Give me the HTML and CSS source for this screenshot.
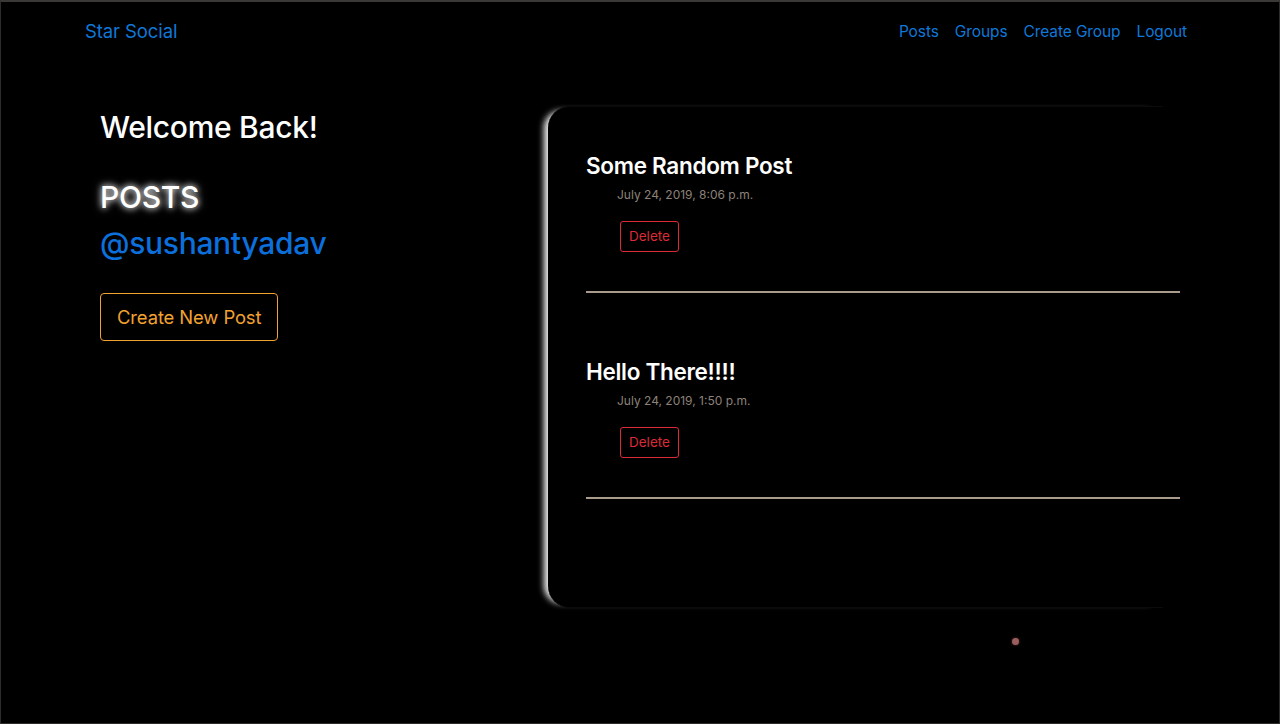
FILE: index.html
```html
<!DOCTYPE html>
<html>
<head>
<meta charset="utf-8">
<link rel="stylesheet" href="styles.css">
</head>
<body>
<div class="frame">
  <nav class="navbar">
    <a class="brand" href="#">Star Social</a>
    <ul class="nav-links">
      <li><a href="#">Posts</a></li>
      <li><a href="#">Groups</a></li>
      <li><a href="#">Create Group</a></li>
      <li><a href="#">Logout</a></li>
    </ul>
  </nav>
  <main class="content">
    <section class="sidebar">
      <h2 class="welcome">Welcome Back!</h2>
      <h2 class="posts-title">POSTS</h2>
      <h2 class="username">@sushantyadav</h2>
      <a class="btn-create" href="#">Create New Post</a>
    </section>
    <section class="card">
      <article class="post">
        <h3 class="post-title">Some Random Post</h3>
        <div class="post-date">July 24, 2019, 8:06 p.m.</div>
        <a class="btn-delete" href="#">Delete</a>
        <hr class="post-rule">
      </article>
      <article class="post">
        <h3 class="post-title">Hello There!!!!</h3>
        <div class="post-date">July 24, 2019, 1:50 p.m.</div>
        <a class="btn-delete" href="#">Delete</a>
        <hr class="post-rule">
      </article>
    </section>
  </main>
  <span class="dot"></span>
</div>
</body>
</html>
```
FILE: styles.css
```css
* { box-sizing: border-box; }
html, body { margin: 0; padding: 0; background: #000; }
body {
  font-family: Inter, "Noto Sans", "Liberation Sans", sans-serif;
  color: #fff;
}
a { text-decoration: none; }
.frame {
  position: relative;
  width: 1280px;
  height: 724px;
  border-top: 2px solid #3a3836;
  border-left: 1px solid #2e2c2b;
  border-right: 1px solid #2e2c2b;
  border-bottom: 1px solid #2e2c2b;
  background: #000;
  overflow: hidden;
}
.navbar {
  display: flex;
  align-items: center;
  justify-content: space-between;
  height: 58px;
  padding: 0 92px 0 84px;
}
.brand {
  color: #0f78d8;
  font-size: 18.5px;
  letter-spacing: -0.1px;
}
.nav-links {
  list-style: none;
  display: flex;
  gap: 16px;
  margin: 0;
  padding: 0;
}
.nav-links a {
  color: #0f78d8;
  font-size: 15.5px;
  letter-spacing: -0.1px;
}
.content {
  display: flex;
  align-items: flex-start;
  padding: 49px 0 0 99px;
}
.sidebar {
  width: 448px;
}
.sidebar h2 {
  margin: 0;
  font-size: 30px;
  font-weight: 500;
  letter-spacing: -0.3px;
  line-height: 36px;
}
.welcome { color: #fff; }
.posts-title {
  margin-top: 34px !important;
  color: #fff;
  text-shadow: 0 0 6px rgba(255,255,255,0.9), 0 0 10px rgba(255,255,255,0.6);
}
.username {
  margin-top: 10px !important;
  color: #0b6fdc;
}
.btn-create {
  display: inline-block;
  margin-top: 32px;
  padding: 11px 16px;
  border: 1px solid #f2a230;
  border-radius: 4px;
  color: #f2a230;
  font-size: 18.4px;
  line-height: 24px;
  letter-spacing: -0.1px;
}
.card {
  width: 615px;
  height: 502px;
  margin-top: -3px;
  padding: 45px 0 0 38px;
  border-radius: 22px 0 0 22px;
  border-top: 1px solid #0b0b0b;
  border-bottom: 1px solid #0b0b0b;
  background: #000;
  box-shadow: -9px 0 6px -5px rgba(255,255,255,0.95);
}
.post { width: 594px; }
.post + .post { margin-top: 65px; }
.post-title {
  margin: 0;
  font-size: 22.5px;
  font-weight: 600;
  line-height: 27px;
  letter-spacing: -0.3px;
  color: #fff;
}
.post-date {
  margin: 6px 0 0 31px;
  font-size: 12px;
  line-height: 20px;
  color: #8c8279;
}
.btn-delete {
  display: inline-block;
  margin: 16px 0 0 34px;
  padding: 5px 8px;
  border: 1px solid #dc2a36;
  border-radius: 3px;
  color: #dc2a36;
  font-size: 13.5px;
  line-height: 19px;
}
.post-rule {
  margin: 39px 0 0 0;
  border: 0;
  height: 2px;
  background: #a99c8c;
}
.dot {
  position: absolute;
  left: 1011px;
  top: 636px;
  width: 7px;
  height: 7px;
  border-radius: 50%;
  background: #9a5e5e;
  box-shadow: 0 0 3px rgba(160,80,80,0.6);
}
```
